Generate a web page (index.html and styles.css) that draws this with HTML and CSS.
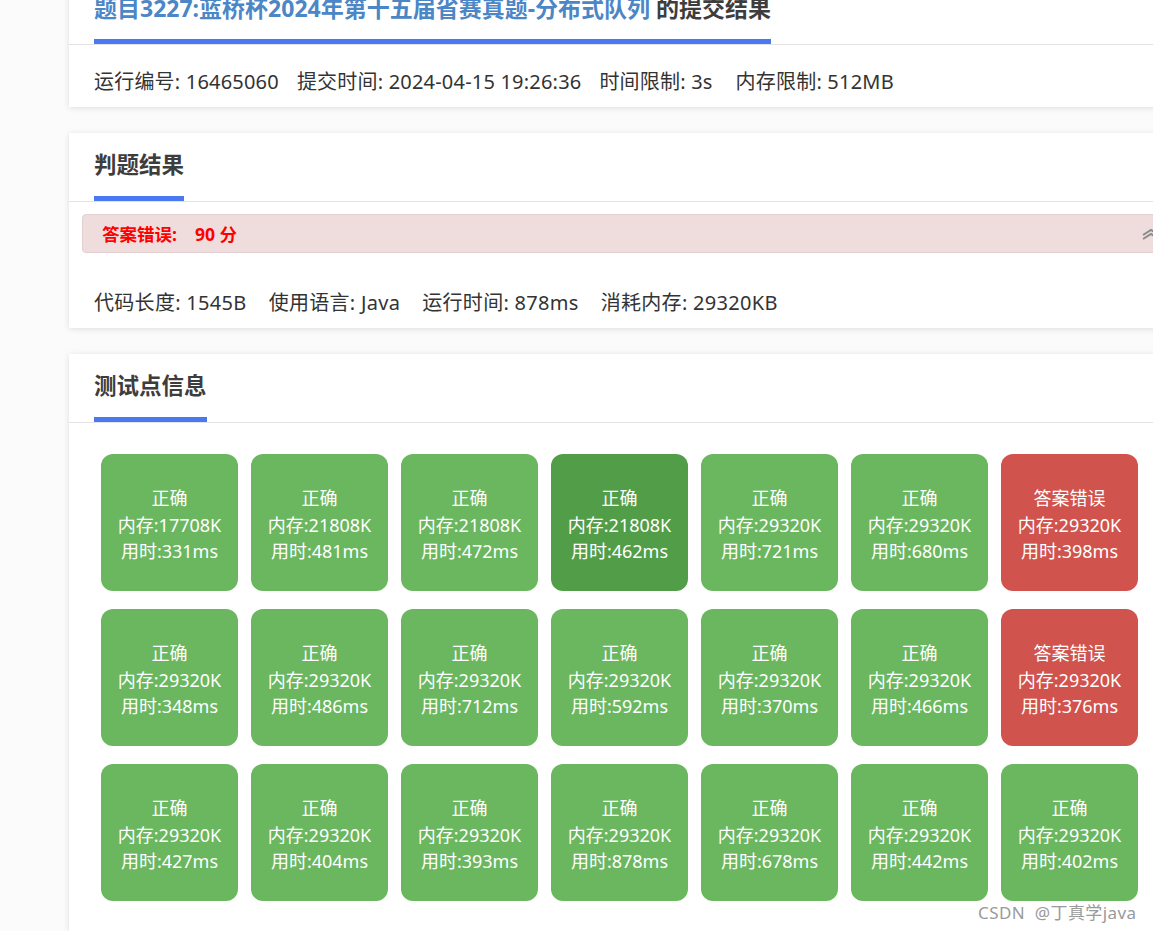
FILE: index.html
```html
<!DOCTYPE html>
<html lang="zh-CN">
<head>
<meta charset="utf-8">
<title>提交结果</title>
<link rel="stylesheet" href="styles.css">
</head>
<body>
<div class="page">
  <section class="card">
    <div class="card-head">
      <h2 class="tab tab-title"><a class="prob-link" href="#">题目3227:蓝桥杯2024年第十五届省赛真题-分布式队列</a> 的提交结果</h2>
    </div>
    <div class="info info-1">
      <span class="item">运行编号: 16465060</span>
      <span class="item">提交时间: 2024-04-15 19:26:36</span>
      <span class="item item-wide">时间限制: 3s</span>
      <span class="item">内存限制: 512MB</span>
    </div>
  </section>

  <section class="card">
    <div class="card-head">
      <h2 class="tab">判题结果</h2>
    </div>
    <div class="alert">
      <span class="alert-label">答案错误:</span>
      <span class="alert-score">90 分</span>
      <svg class="chev" width="20" height="14" viewBox="0 0 20 14"><path d="M2 9 L10 4 L18 9 M2 13 L10 8 L18 13" fill="none" stroke="#8a8a8a" stroke-width="2"/></svg>
    </div>
    <div class="info info-2">
      <span class="item">代码长度: 1545B</span>
      <span class="item">使用语言: Java</span>
      <span class="item">运行时间: 878ms</span>
      <span class="item">消耗内存: 29320KB</span>
    </div>
  </section>

  <section class="card">
    <div class="card-head">
      <h2 class="tab">测试点信息</h2>
    </div>
    <div class="grid">
      <div class="tc ok"><span>正确</span><span>内存:17708K</span><span>用时:331ms</span></div>
      <div class="tc ok"><span>正确</span><span>内存:21808K</span><span>用时:481ms</span></div>
      <div class="tc ok"><span>正确</span><span>内存:21808K</span><span>用时:472ms</span></div>
      <div class="tc ok hover"><span>正确</span><span>内存:21808K</span><span>用时:462ms</span></div>
      <div class="tc ok"><span>正确</span><span>内存:29320K</span><span>用时:721ms</span></div>
      <div class="tc ok"><span>正确</span><span>内存:29320K</span><span>用时:680ms</span></div>
      <div class="tc wa"><span>答案错误</span><span>内存:29320K</span><span>用时:398ms</span></div>

      <div class="tc ok"><span>正确</span><span>内存:29320K</span><span>用时:348ms</span></div>
      <div class="tc ok"><span>正确</span><span>内存:29320K</span><span>用时:486ms</span></div>
      <div class="tc ok"><span>正确</span><span>内存:29320K</span><span>用时:712ms</span></div>
      <div class="tc ok"><span>正确</span><span>内存:29320K</span><span>用时:592ms</span></div>
      <div class="tc ok"><span>正确</span><span>内存:29320K</span><span>用时:370ms</span></div>
      <div class="tc ok"><span>正确</span><span>内存:29320K</span><span>用时:466ms</span></div>
      <div class="tc wa"><span>答案错误</span><span>内存:29320K</span><span>用时:376ms</span></div>

      <div class="tc ok"><span>正确</span><span>内存:29320K</span><span>用时:427ms</span></div>
      <div class="tc ok"><span>正确</span><span>内存:29320K</span><span>用时:404ms</span></div>
      <div class="tc ok"><span>正确</span><span>内存:29320K</span><span>用时:393ms</span></div>
      <div class="tc ok"><span>正确</span><span>内存:29320K</span><span>用时:878ms</span></div>
      <div class="tc ok"><span>正确</span><span>内存:29320K</span><span>用时:678ms</span></div>
      <div class="tc ok"><span>正确</span><span>内存:29320K</span><span>用时:442ms</span></div>
      <div class="tc ok"><span>正确</span><span>内存:29320K</span><span>用时:402ms</span></div>
    </div>
  </section>
</div>
<div class="watermark">CSDN @丁真学java</div>
</body>
</html>
```

FILE: styles.css
```css
html, body {
  margin: 0;
  padding: 0;
}
body {
  background: #fbfbfb;
  font-family: "Noto Sans", "Noto Sans CJK SC", sans-serif;
  color: #333;
  overflow: hidden;
  height: 931px;
  position: relative;
}
.page {
  margin-top: -24px;
  padding-left: 69px;
  display: flex;
  flex-direction: column;
  gap: 26px;
}
.card {
  width: 1110px;
  background: #fff;
  box-shadow: 0 1px 6px rgba(0, 0, 0, 0.12);
}
.card-head {
  padding: 0 25px;
  border-bottom: 1px solid #e3e3e3;
  display: flex;
}
.tab {
  margin: 0;
  padding: 18px 0 17px;
  line-height: 28px;
  font-size: 22.5px;
  font-weight: bold;
  color: #3d3d3d;
  border-bottom: 5px solid #4a78f0;
  white-space: nowrap;
}
.tab-title {
  font-size: 23px;
}
.prob-link {
  color: #4b86c6;
  text-decoration: none;
}
.info {
  padding: 25px 25px 13px;
  line-height: 24px;
  font-size: 20px;
  color: #333;
  display: flex;
  white-space: nowrap;
}
.info-1 {
  gap: 18px;
  letter-spacing: 0.2px;
}
.item-wide {
  margin-right: 5px;
}
.info-2 {
  padding-top: 38px;
  gap: 22px;
  letter-spacing: 0.3px;
}
.alert {
  margin: 12px 0 0 13px;
  height: 37px;
  border: 1px solid #e2cfcf;
  border-radius: 4px;
  background: #efdddd;
  display: flex;
  align-items: center;
  padding-left: 19px;
  position: relative;
  font-size: 17.5px;
  font-weight: bold;
  color: #f00;
}
.alert-score {
  margin-left: 18px;
}
.chev {
  position: absolute;
  left: 1058px;
  top: 11px;
}
.grid {
  padding: 31px 32px 30px;
  display: grid;
  grid-template-columns: repeat(7, 137px);
  column-gap: 13px;
  row-gap: 18px;
}
.tc {
  height: 137px;
  border-radius: 12px;
  display: flex;
  flex-direction: column;
  align-items: center;
  justify-content: center;
  padding-top: 5px;
  box-sizing: border-box;
  color: #fff;
  font-size: 18px;
  line-height: 26.5px;
  white-space: nowrap;
}
.ok { background: #6ab760; }
.ok.hover { background: #529e48; }
.wa { background: #d0534d; }
.watermark {
  position: absolute;
  left: 978px;
  top: 899px;
  font-size: 17px;
  letter-spacing: 0.4px;
  word-spacing: 5px;
  color: #9a9a9a;
  font-family: "Noto Sans", "Noto Sans CJK SC", sans-serif;
  text-shadow: 0 0 2px #fff;
}
```
